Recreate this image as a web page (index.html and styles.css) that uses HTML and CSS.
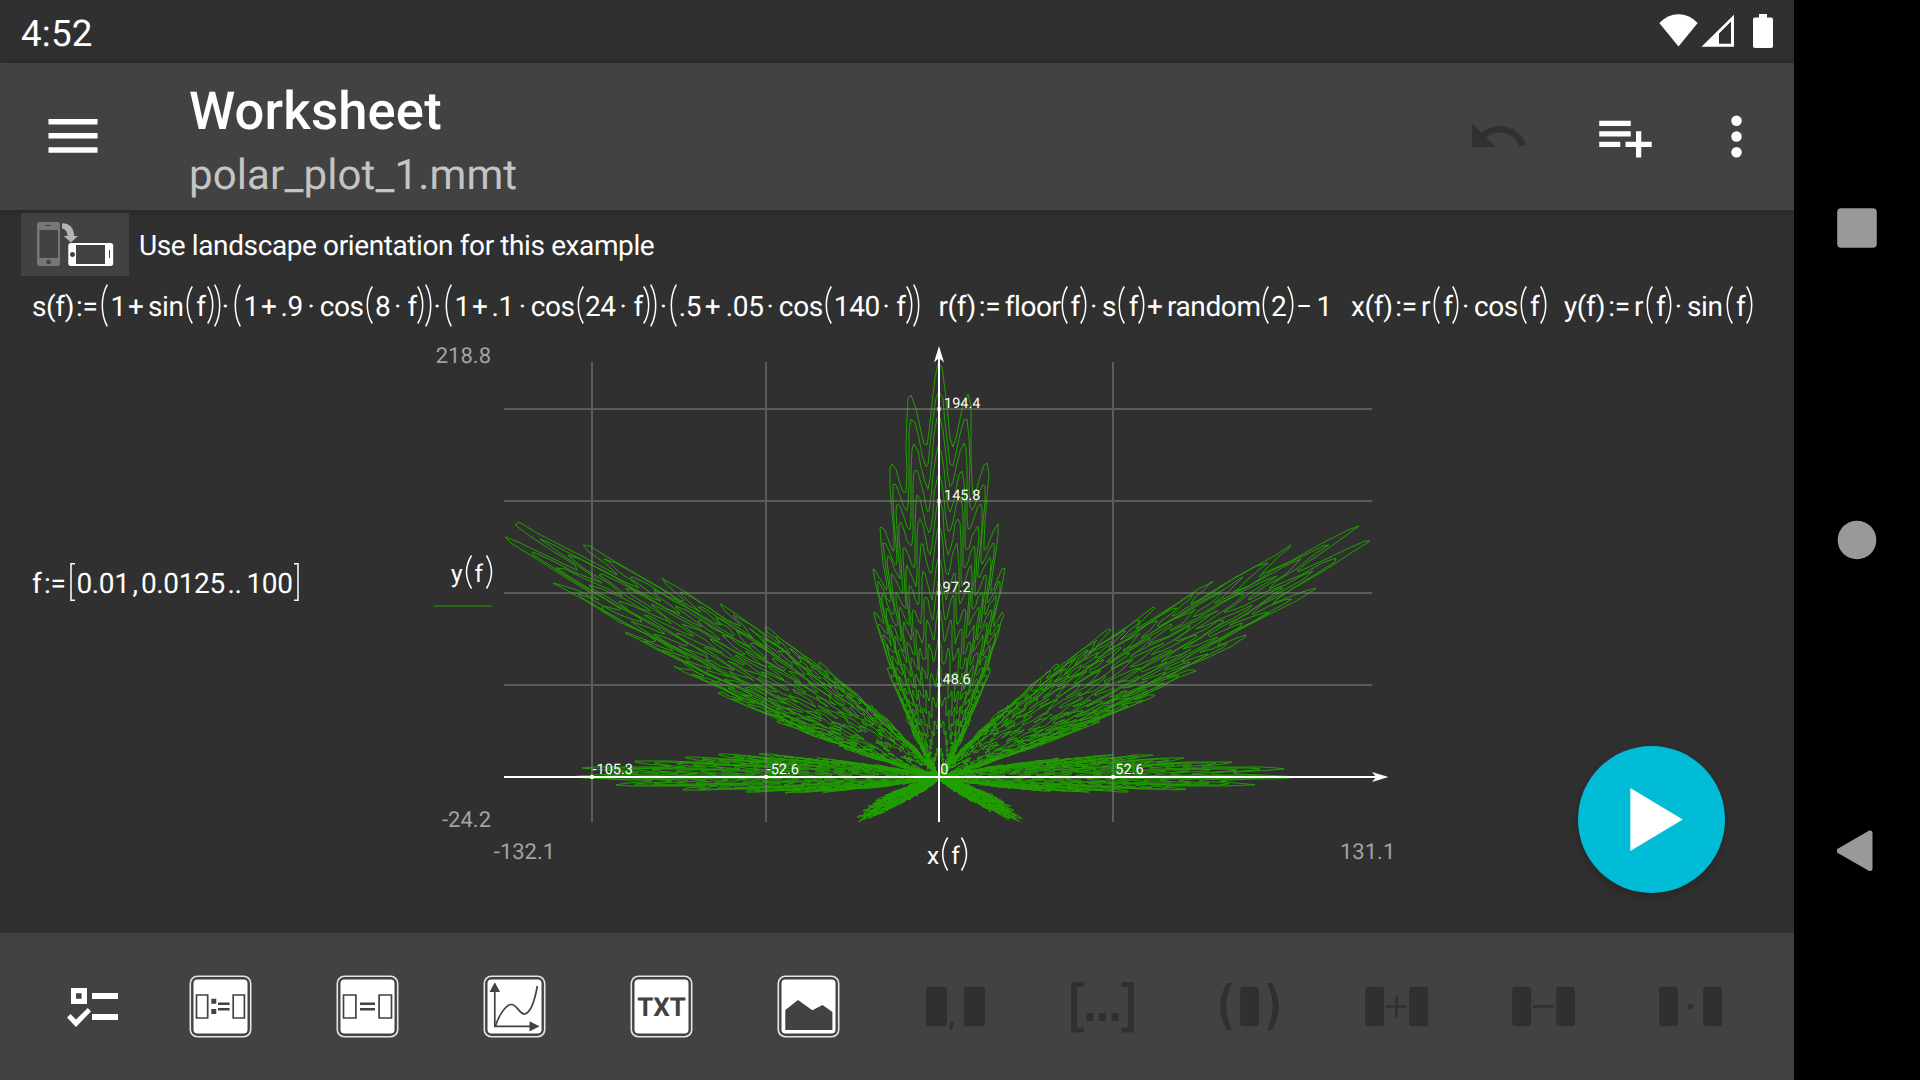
FILE: index.html
```html
<!DOCTYPE html>
<html lang="en">
<head>
<meta charset="utf-8">
<title>Worksheet</title>
<link rel="stylesheet" href="styles.css">
</head>
<body>
<svg width="0" height="0" class="defs">
  <symbol id="lp" viewBox="0 0 7 38" preserveAspectRatio="none"><path d="M6.3.5Q1.3 8.500 1.300 19T6.300 37.500"/></symbol>
  <symbol id="rp" viewBox="0 0 7 38" preserveAspectRatio="none"><path d="M.7.5Q5.700 8.500 5.700 19T.7 37.500"/></symbol>
</svg>
<div class="screen">
  <main class="app">
    <header class="status">
      <span class="clock">4:52</span>
      <svg class="status-icons" width="116" height="36" viewBox="1658 13 116 36" fill="#fff">
        <path d="M1678.500 46.500 1659.300 23Q1667.500 14.200 1678.500 14.200T1697.700 23Z"/>
        <path fill-rule="evenodd" d="M1734 14.700V46.700H1701.500ZM1731 21.500 1719 33.500V43.700H1731Z"/>
        <path d="M1759 14h8v3.500h4q2 0 2 2V46q0 2-2 2h-16q-2 0-2-2V19.500q0-2 2-2h4Z"/>
      </svg>
    </header>
    <div class="toolbar">
      <svg class="menu" width="50" height="36" viewBox="0 0 50 36" fill="#fff"><path d="M.5 1h49v5.600H.5zM.5 15h49v5.600H.5zM.5 29.200h49v5.600H.5z"/></svg>
      <div class="titles"><h1>Worksheet</h1><p>polar_plot_1.mmt</p></div>
      <div class="actions">
        <svg width="63" height="63" viewBox="0 0 24 24" fill="#303030"><path d="M12.500 8c-2.650 0-5.050.99-6.900 2.600L2 7v9h9l-3.620-3.620c1.390-1.160 3.160-1.880 5.120-1.880 3.540 0 6.550 2.310 7.600 5.500l2.370-.78C21.080 11.030 17.150 8 12.500 8z"/></svg>
        <svg width="63" height="63" viewBox="0 0 24 24" fill="#fff"><path d="M14 10H2v2h12v-2zm0-4H2v2h12V6zm4 8v-4h-2v4h-4v2h4v4h2v-4h4v-2h-4zM2 16h8v-2H2v2z"/></svg>
        <svg width="63" height="63" viewBox="0 0 24 24" fill="#fff"><circle cx="12" cy="6" r="2"/><circle cx="12" cy="12" r="2"/><circle cx="12" cy="18" r="2"/></svg>
      </div>
    </div>
    <section class="sheet">
      <div class="note">
        <svg width="108" height="63" viewBox="21 213 108 63">
          <rect x="21" y="213" width="108" height="63" fill="#424242"/>
          <path fill="#777" fill-rule="evenodd" d="M39.500 222h18q2.500 0 2.500 2.500v39q0 2.500-2.500 2.500h-18q-2.500 0-2.500-2.500v-39q0-2.500 2.500-2.500ZM39.500 230v28h18.500v-28ZM48.500 259.700a2.300 2.300 0 1 0 .01 0ZM45 225v1h6v-1Z"/>
          <path fill="#b4b4b4" d="M62 223.300Q73.500 223.500 74.200 236H78L71 242.500 63.700 236H67.500Q67.500 229.500 62 228.500Z"/>
          <path fill="#fff" fill-rule="evenodd" d="M71 243h39.500q2.700 0 2.700 2.700v17.600q0 2.700-2.700 2.700H71q-2.700 0-2.700-2.700v-17.600q0-2.700 2.700-2.700ZM76 245v19h29v-19ZM72.500 252a2.500 2.500 0 1 0 .01 0ZM109 250v8h1v-8Z"/>
        </svg>
        <span>Use landscape orientation for this example</span>
      </div>
      <div class="formulas">
        <div class="formula f-s">
          <span>s(f)</span><span>:=</span><svg class="big"><use href="#lp"/></svg><span>1</span><span>+</span><span>sin</span><svg><use href="#lp"/></svg><span>f</span><svg><use href="#rp"/></svg><svg class="big"><use href="#rp"/></svg><i>·</i>
          <svg class="big"><use href="#lp"/></svg><span>1</span><span>+</span><span>.9</span><i>·</i><span>cos</span><svg><use href="#lp"/></svg><span>8</span><i>·</i><span>f</span><svg><use href="#rp"/></svg><svg class="big"><use href="#rp"/></svg><i>·</i>
          <svg class="big"><use href="#lp"/></svg><span>1</span><span>+</span><span>.1</span><i>·</i><span>cos</span><svg><use href="#lp"/></svg><span>24</span><i>·</i><span>f</span><svg><use href="#rp"/></svg><svg class="big"><use href="#rp"/></svg><i>·</i>
          <svg class="big"><use href="#lp"/></svg><span>.5</span><span>+</span><span>.05</span><i>·</i><span>cos</span><svg><use href="#lp"/></svg><span>140</span><i>·</i><span>f</span><svg><use href="#rp"/></svg><svg class="big"><use href="#rp"/></svg>
        </div>
        <div class="formula f-r">
          <span>r(f)</span><span>:=</span><span>floor</span><svg><use href="#lp"/></svg><span>f</span><svg><use href="#rp"/></svg><i>·</i><span>s</span><svg><use href="#lp"/></svg><span>f</span><svg><use href="#rp"/></svg><span>+</span><span>random</span><svg><use href="#lp"/></svg><span>2</span><svg><use href="#rp"/></svg><span>−</span><span>1</span>
        </div>
        <div class="formula f-x">
          <span>x(f)</span><span>:=</span><span>r</span><svg><use href="#lp"/></svg><span>f</span><svg><use href="#rp"/></svg><i>·</i><span>cos</span><svg><use href="#lp"/></svg><span>f</span><svg><use href="#rp"/></svg>
        </div>
        <div class="formula f-y">
          <span>y(f)</span><span>:=</span><span>r</span><svg><use href="#lp"/></svg><span>f</span><svg><use href="#rp"/></svg><i>·</i><span>sin</span><svg><use href="#lp"/></svg><span>f</span><svg><use href="#rp"/></svg>
        </div>
      </div>
      <div class="plot-row">
        <div class="formula f-range">
          <span>f</span><span>:=</span><svg viewBox="0 0 6 38"><path d="M5 .8H1V37.200H5"/></svg><span>0.01</span><span>,</span><span>0.0125</span><span>..</span><span>100</span><svg viewBox="0 0 6 38"><path d="M1 .8H5V37.200H1"/></svg>
        </div>
        <svg class="plot" width="970" height="540" viewBox="430 340 970 540">
          <path id="curve" class="curve"/>
          <path class="grid" d="M504 409H1372M504 501H1372M504 593H1372M504 685H1372M592 362V822M766 362V822M1113 362V822"/>
          <path class="axis" d="M504 777H1385M939 822V352"/>
          <path class="tick" d="M937.500 409h3M937.500 501h3M937.500 593h3M937.500 685h3M590.500 777h3M764.500 777h3M1111.500 777h3"/>
          <path fill="#fff" d="M939 346 944 362.500 939 358 934 362.500ZM1388.500 777 1372 782 1376 777 1372 772Z"/>
          <g class="ticks">
            <text x="944" y="407.700">194.4</text><text x="944" y="499.700">145.8</text><text x="942.500" y="591.700">97.2</text><text x="942.500" y="683.700">48.6</text>
            <text x="592.500" y="774">-105.3</text><text x="766.700" y="774">-52.6</text><text x="940.200" y="774">0</text><text x="1115.300" y="774">52.6</text>
          </g>
          <g class="limits">
            <text x="491" y="363" text-anchor="end">218.8</text><text x="491" y="827" text-anchor="end">-24.2</text>
            <text x="493.800" y="859">-132.1</text><text x="1340" y="859">131.1</text>
          </g>
          <g class="labels">
            <text x="451" y="582">y</text><text x="474.500" y="582">f</text>
            <text x="927" y="864">x</text><text x="951.300" y="864">f</text>
          </g>
          <path class="parens" d="M471.500 555.500Q461.500 572 471.500 588.500M486.500 555.500Q496.500 572 486.500 588.500M947.700 837.500Q937.700 854 947.700 870.500M961.500 837.500Q971.500 854 961.500 870.500"/>
          <path class="legend" d="M434 606H492"/>
        </svg>
      </div>
      <button class="fab"><svg width="147" height="147" viewBox="0 0 147 147"><path fill="#fff" d="M52.300 42 104.800 73.500 52.300 105Z"/></svg></button>
    </section>
    <footer class="tools">
      <svg class="first" viewBox="0 0 63 63" fill="#fff"><path fill-rule="evenodd" d="M10 13h16v16H10ZM15 18.200v5.600h5.600v-5.600Z"/><path d="M31 18h26v6H31zM31 39h26v6H31zM6 42.500 9.500 39 15 44.500 26.800 33 30 36.500 15 52Z"/></svg>
      <svg viewBox="0 0 63 63"><rect class="frame" x="1.300" y="1.300" width="60.400" height="60.400" rx="7"/><rect class="face" x="4.500" y="4.500" width="54" height="54" rx="4"/><path class="line" d="M7.500 20h11.200v23H7.500zM44.200 20h11.200v23H44.200z"/><path class="ink" d="M22.300 23.700h5v5h-5zM22.300 34h5v5h-5zM29 27.400h11.600v2.600H29zM29 33h11.600v2.600H29z"/></svg>
      <svg viewBox="0 0 63 63"><rect class="frame" x="1.300" y="1.300" width="60.400" height="60.400" rx="7"/><rect class="face" x="4.500" y="4.500" width="54" height="54" rx="4"/><path class="line" d="M7.500 20h12.400v23H7.500zM43.100 20h12.400v23H43.100z"/><path class="ink" d="M24 27.400h15v2.600H24zM24 33h15v2.600H24z"/></svg>
      <svg viewBox="0 0 63 63"><rect class="frame" x="1.300" y="1.300" width="60.400" height="60.400" rx="7"/><rect class="face" x="4.500" y="4.500" width="54" height="54" rx="4"/><path class="line" d="M11.800 14V51.300H49"/><path class="line" d="M12.500 51C16 40 23 29.500 28.500 29.500S37 40 41.700 39 51 30 54.300 11"/><path class="ink" d="M11.800 7.300 17 17H6.500ZM56.500 51.300 46.500 56.400V46.200Z"/></svg>
      <svg viewBox="0 0 63 63"><rect class="frame" x="1.300" y="1.300" width="60.400" height="60.400" rx="7"/><rect class="face" x="4.500" y="4.500" width="54" height="54" rx="4"/><text class="txt" x="31.600" y="41" textLength="48.500" text-anchor="middle">TXT</text></svg>
      <svg viewBox="0 0 63 63"><rect class="frame" x="1.300" y="1.300" width="60.400" height="60.400" rx="7"/><rect class="face" x="4.500" y="4.500" width="54" height="54" rx="4"/><path class="ink" d="M8.300 35 21 25 35.300 35.300 45.600 30 55.400 37V55H8.300Z"/></svg>
      <svg class="off" viewBox="0 0 63 63"><rect x="2" y="11.700" width="21" height="39.600" rx="3"/><rect x="40" y="11.700" width="21" height="39.600" rx="3"/><path d="M26.500 46.300H30.500L28 54.500H25.500Z"/></svg>
      <svg class="off" viewBox="0 0 63 63"><path d="M.3 7H12.600V12H6V52.500H12.600V57.500H.3ZM50.500 7H62.800V57.500H50.500V52.500H57V12H50.500ZM15.500 38h7v8h-7zM28 38h7v8h-7zM40.500 38h7v8h-7z"/></svg>
      <svg class="off" viewBox="0 0 63 63"><rect x="22.200" y="11.700" width="18.700" height="39.600" rx="3"/><path d="M9 8H14Q2.500 31.500 14 55H9Q-4.500 31.500 9 8ZM54 8H49Q60.500 31.500 49 55H54Q67.500 31.500 54 8Z"/></svg>
      <svg class="off" viewBox="0 0 63 63"><rect x=".3" y="11.700" width="18.800" height="39.600" rx="3"/><rect x="44.200" y="11.700" width="18.800" height="39.600" rx="3"/><path d="M21 30.200h21v2.600H21zM30.300 21h2.600v21h-2.600z"/></svg>
      <svg class="off" viewBox="0 0 63 63"><rect x=".3" y="11.700" width="18.800" height="39.600" rx="3"/><rect x="44.200" y="11.700" width="18.800" height="39.600" rx="3"/><path d="M21 30.200h21v2.600H21z"/></svg>
      <svg class="off" viewBox="0 0 63 63"><rect x=".3" y="11.700" width="18.800" height="39.600" rx="3"/><rect x="44.200" y="11.700" width="18.800" height="39.600" rx="3"/><circle cx="31.600" cy="31.500" r="2.900"/></svg>
    </footer>
  </main>
  <nav class="system">
    <svg width="40" height="40" viewBox="0 0 40 40" fill="#999"><rect x=".2" y=".2" width="39.600" height="39.600" rx="4"/></svg>
    <svg width="40" height="40" viewBox="0 0 40 40" fill="#999"><circle cx="20" cy="20" r="19.300"/></svg>
    <svg width="40" height="44" viewBox="0 0 40 44" fill="#999" stroke="#999" stroke-width="5" stroke-linejoin="round"><path d="M33 4V39.600L2 21.800Z"/></svg>
  </nav>
</div>
<script src="plot.js"></script>
</body>
</html>
```
FILE: styles.css
```css
* { box-sizing: border-box; margin: 0; padding: 0; }
body { background: #000; color: #fff; font-family: Roboto, sans-serif; overflow: hidden; text-rendering: geometricPrecision; }
svg { display: block; }
.defs { position: absolute; }
.screen { display: flex; width: 1920px; height: 1080px; }
.app { display: flex; flex-direction: column; width: 1794px; background: #303030; }

.status { display: flex; justify-content: space-between; height: 63px; padding: 13px 20px 0 21px; }
.clock { margin-top: 1px; font-size: 36.75px; line-height: 40px; letter-spacing: .2px; }

.toolbar { position: relative; z-index: 1; display: flex; height: 147px; padding-left: 48px; background: #424242; box-shadow: 0 1px 8px rgba(0, 0, 0, .25); }
.menu { margin-top: 55px; }
.titles { margin-left: 91px; padding-top: 16px; }
.titles h1 { font-size: 52.5px; font-weight: 500; line-height: 64px; letter-spacing: .2px; }
.titles p { color: #c4c4c4; font-size: 42px; line-height: 66px; letter-spacing: .12px; }
.actions { display: flex; margin: 42px 26px 0 auto; }
.actions svg:nth-child(1) { margin-right: 64px; }
.actions svg:nth-child(2) { margin-right: 48px; }

.sheet { position: relative; flex: 1; font-size: 28px; letter-spacing: -.39px; }
.note { display: flex; align-items: center; gap: 10px; padding: 3px 0 0 21px; }
.note span { padding-top: 2px; }
.formulas { display: flex; height: 58px; padding-left: 32px; }
.formula { display: grid; align-items: center; height: 58px; white-space: nowrap; }
.formula > * { min-width: 0; }
.formula span, .formula i { padding-top: 3px; line-height: 55px; }
.formula svg { width: 7px; height: 38px; fill: none; stroke: #fff; stroke-width: 1.500; overflow: visible; }
.formula svg.big { height: 43px; }
.formula i { width: 8px; font-style: normal; text-align: center; }
.defs path { vector-effect: non-scaling-stroke; }
.f-s { width: 906.500px; grid-template-columns: 44px 24.500px 10px 17.500px 20px 38px 10.200px 10.600px 7px 7.500px 12.500px 9.700px 17.500px 19.500px 26.500px 12.800px 46px 9.200px 18.500px 14px 9.700px 7.600px 8.200px 11.800px 9.700px 17.500px 19.500px 26.900px 12.400px 46.400px 7.800px 34px 14.500px 9.300px 7px 9.500px 11.200px 8.500px 26px 21px 40px 13px 45.800px 9.200px 48px 14.300px 9.500px 7px 7.200px; }
.f-r { width: 412.500px; grid-template-columns: 40.300px 25.900px 56px 9.800px 9.500px 9.500px 12.500px 16.500px 10.300px 9.700px 8.500px 20px 94.800px 9.200px 16.300px 8.700px 20.500px 15.500px; }
.f-x { width: 213px; grid-template-columns: 44.300px 25.700px 12.500px 9.800px 9.200px 9px 12.500px 46px 10px 9.600px 7.400px; }
.f-y { grid-template-columns: 44.300px 25.700px 12.300px 9.700px 9px 9.300px 12.700px 39px 10px 9.800px 7.200px; }
.f-range { width: 398px; margin-top: 213px; padding-left: 32px; grid-template-columns: 12px 26px 6.500px 56px 8.500px 86.500px 19px 46px 6px; }
.f-range svg { width: 6px; }

.plot-row { display: flex; margin-top: 6px; }
.plot { margin-left: 32px; fill: none; letter-spacing: 0; }
.plot text { fill: #fff; }
.curve { stroke: #219f00; stroke-width: 1; }
.grid { stroke: rgba(136, 136, 136, .5); stroke-width: 2; }
.axis { stroke: #fff; stroke-width: 2; }
.tick { stroke: #fff; stroke-width: 4; }
.ticks { font-size: 14.500px; }
.limits { font-size: 22px; }
.plot .limits text { fill: #a2a2a2; }
.labels { font-size: 24.500px; }
.parens { stroke: #fff; stroke-width: 1.500; }
.legend { stroke: #286817; stroke-width: 2; }

.fab { position: absolute; right: 69px; bottom: 40px; width: 147px; height: 147px; border: 0; border-radius: 50%; background: #00bcd6; box-shadow: 0 4px 12px rgba(0, 0, 0, .22); }

.tools { display: flex; gap: 84px; height: 147px; padding: 42px 0 0 61px; background: #424242; }
.tools svg { flex: none; width: 63px; height: 63px; }
.tools .first { margin-right: -19px; }
.frame { fill: none; stroke: #e6e6e6; stroke-width: 1.600; }
.face { fill: #fff; }
.line { fill: none; stroke: #424242; stroke-width: 1.700; }
.ink { fill: #424242; }
.txt { fill: #424242; font: 700 26px Roboto, sans-serif; }
.off { fill: #303030; }

.system { display: flex; flex-direction: column; align-items: center; width: 126px; padding-top: 208px; background: #000; }
.system svg:nth-child(2) { margin: 272px 0 269px; }
```
FILE: plot.js
```js
// Traces x(f) = r(f)·cos(f), y(f) = r(f)·sin(f) for f from 0.01 to 100.
// r(f) is evaluated separately for x and y, so each gets its own random term.
const X0 = 939, Y0 = 777, SX = 3.298, SY = 1.892;
const NOISE = 0.8;
let seed = 7;
function random(n) {
  seed = (seed * 1664525 + 1013904223) >>> 0;
  return n * seed / 4294967296;
}
const points = [];
for (let i = 0; i <= 39996; i += 2) {
  const f = 0.01 + i * 0.0025;
  const s = (1 + Math.sin(f)) * (1 + 0.9 * Math.cos(8 * f)) *
            (1 + 0.1 * Math.cos(24 * f)) * (0.5 + 0.05 * Math.cos(140 * f));
  const r = () => Math.floor(f) * s + NOISE * (random(2) - 1);
  const x = Math.max(504, Math.round(X0 + SX * r() * Math.cos(f)));
  const p = x + ' ' + Math.round(Y0 - SY * r() * Math.sin(f));
  if (p !== points[points.length - 1]) points.push(p);
}
document.getElementById('curve').setAttribute('d', 'M' + points.join('L'));
```
